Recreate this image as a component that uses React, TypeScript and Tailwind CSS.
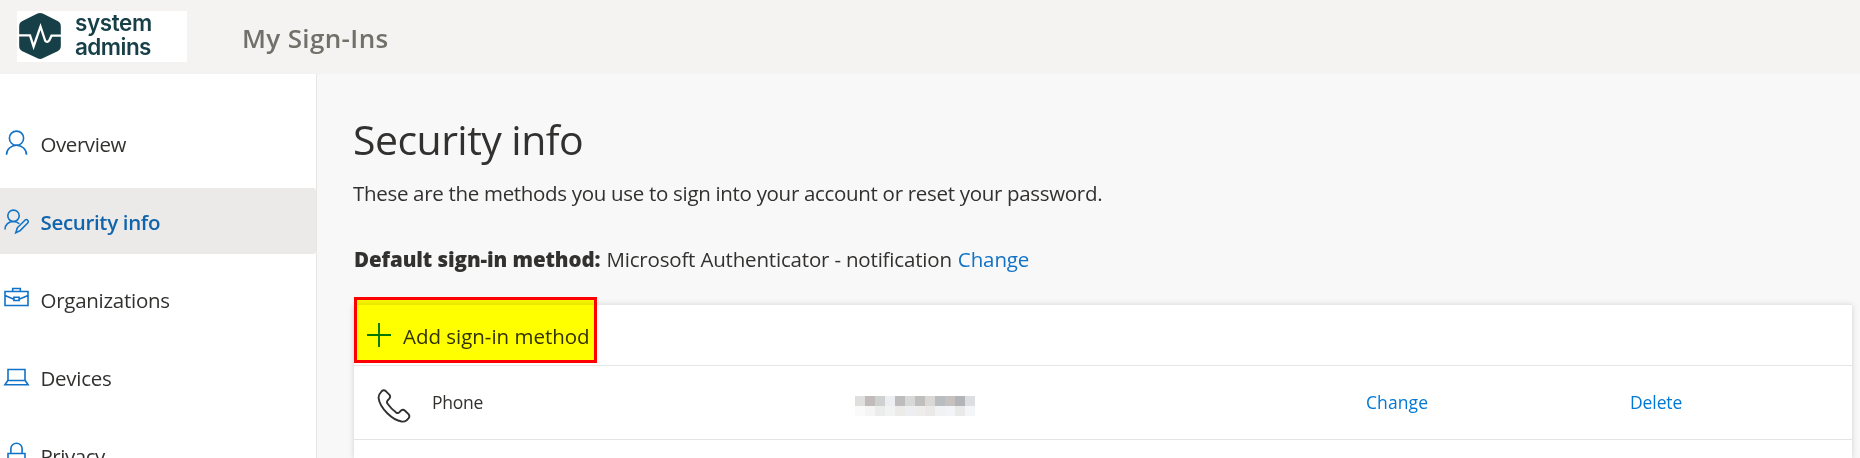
import type { ReactNode } from 'react';

function Logo() {
  return (
    <div className="flex h-[51px] w-[170px] items-start bg-white">
      <svg width="46" height="51" viewBox="0 0 46 51" className="shrink-0" fill="none">
        <path
          d="M20.500 2.600q2.600-1.300 5.200 0L40.600 10q3.200 1.700 3.200 5V35.200q0 3.300-3.200 5L25.700 47.300q-2.600 1.300-5.200 0L5.400 40.200q-3.200-1.700-3.200-5V15q0-3.300 3.200-5z"
          fill="#173f47"
        />
        <path
          d="M1.500 24.300H13L16.600 35.500 23.500 15.500 28.200 29.800Q30 32 32.200 29.500L34.500 24.700H45"
          stroke="#fff"
          strokeWidth="2.300"
        />
      </svg>
      <div className="pl-3 font-['Inter','DejaVu_Sans',sans-serif] text-[22.5px] leading-[23.500px] font-semibold text-[#173f47]">
        <div className="tracking-[-0.4px]">system</div>
        <div className="tracking-[-0.55px]">admins</div>
      </div>
    </div>
  );
}

function NavIcon({ children }: { children: ReactNode }) {
  return (
    <svg
      width="32"
      height="32"
      viewBox="0 0 32 32"
      className="shrink-0"
      fill="none"
      stroke="#1272c6"
      strokeWidth="1.600"
    >
      {children}
    </svg>
  );
}

function NavItem({
  label,
  tracking,
  active = false,
  children,
}: {
  label: string;
  tracking: string;
  active?: boolean;
  children: ReactNode;
}) {
  return (
    <a
      className={`flex h-[66px] shrink-0 items-center rounded-r-[3px] text-[20.5px] leading-7 ${
        active ? 'bg-[#ebeae9] font-semibold text-[#1064ac]' : 'text-[#323130]'
      }`}
    >
      <NavIcon>{children}</NavIcon>
      <span className={`pt-[2px] pl-[8.500px] ${tracking}`}>{label}</span>
    </a>
  );
}

const redacted = [
  ['bg-[#dfdfdd]', 'bg-[#c2bbbb]', 'bg-[#cdd2d0]', 'bg-[#eceef1]', 'bg-[#bdbdbe]', 'bg-[#d7d9d8]', 'bg-[#c0bfbe]', 'bg-[#d9d8d6]', 'bg-[#babdc0]', 'bg-[#c4c1be]', 'bg-[#b2b4b7]', 'bg-[#dddee1]'],
  ['bg-[#fafafa]', 'bg-[#f6f5f5]', 'bg-[#ebecec]', 'bg-[#f1f3f3]', 'bg-[#ecebe9]', 'bg-[#eceef1]', 'bg-[#eeedeb]', 'bg-[#ebe9e7]', 'bg-[#f0f2f4]', 'bg-[#f2f4f7]', 'bg-[#e9e9e9]', 'bg-[#f3f5f8]'],
];

export default function App() {
  return (
    <div className="flex h-[458px] w-[1860px] flex-col overflow-hidden bg-[#f8f8f8] font-['Open_Sans','Noto_Sans',sans-serif] text-[#323130]">
      <header className="flex h-[74px] shrink-0 items-start bg-[#f4f3f2] pt-[11px] pl-[17px]">
        <Logo />
        <div className="pt-[9px] pl-[55px] text-[26px] leading-9 font-semibold tracking-[0.36px] text-[#737069]">
          My Sign-Ins
        </div>
      </header>

      <div className="flex min-h-0 flex-1">
        <nav className="flex w-[317px] shrink-0 flex-col gap-3 overflow-hidden border-r border-[#e6e6e6] bg-white pt-9">
          <NavItem label="Overview" tracking="tracking-[-0.43px]">
            <circle cx="16.500" cy="11.200" r="7.100" />
            <path d="M6.500 27.800a10 9.600 0 0 1 20 0" />
          </NavItem>
          <NavItem label="Security info" tracking="tracking-[-0.33px]" active>
            <circle cx="13.500" cy="10.800" r="5.700" />
            <path d="M5 24.400c0-4.800 3.800-7.900 8.300-7.900 2.400 0 4.500.800 6 2.300M15.800 27.800l1.500-5L24.900 15.200a1.900 1.900 0 0 1 2.800 2.800L20.200 25.600z" />
          </NavItem>
          <NavItem label="Organizations" tracking="tracking-[-0.27px]">
            <path d="M5 8.500H28V22.500H5zM12.700 8.500V5.500H20.300V8.500M5 12.500l8.900 3.700M28 12.500l-8.900 3.700M13.900 14.300H19.100V17.500H13.900z" />
          </NavItem>
          <NavItem label="Devices" tracking="tracking-[-0.27px]">
            <path d="M8 19.500V8.500H25V19.500zM7.800 19.500L4.900 23.700H28.100L25.200 19.500" />
          </NavItem>
          <NavItem label="Privacy" tracking="tracking-[-0.47px]">
            <path d="M8 14.500H25V26H8zM10.900 14.500V9.500a5.600 5.300 0 0 1 11.200 0V14.500" />
          </NavItem>
        </nav>

        <main className="flex flex-1 flex-col pt-[37px] pr-2 pl-[37px]">
          <h1 className="-ml-px text-[41px] leading-[56px] tracking-[-0.54px]">Security info</h1>
          <p className="mt-3 -ml-px text-[20.5px] leading-7 tracking-[-0.31px]">
            These are the methods you use to sign into your account or reset your password.
          </p>
          <div className="mt-[38px] flex gap-[6px] text-[20.5px] leading-7">
            <span className="font-extrabold tracking-[-0.08px]">Default sign-in method:</span>
            <span className="tracking-[-0.18px]">Microsoft Authenticator - notification</span>
            <a className="tracking-[-0.12px] text-[#1272c6]">Change</a>
          </div>

          <section className="relative mt-[31px] flex flex-1 flex-col border-t border-[#e8e8e8] bg-white shadow-[0_1px_6px_rgba(0,0,0,0.16)]">
            <div className="flex h-[61px] shrink-0 items-center border-b border-[#e5e5e5] pl-[13px]">
              <svg width="24" height="24" viewBox="0 0 24 24" stroke="#0078d4" strokeWidth="1.900">
                <path d="M0 12H24M12 0V24" />
              </svg>
              <span className="pt-[2px] pl-3 text-[20.5px] leading-7 tracking-[-0.02px]">
                Add sign-in method
              </span>
            </div>
            <div className="grid h-[74px] shrink-0 grid-cols-[78px_423px_511px_264px_1fr] items-center border-b border-[#e5e5e5] text-[17.5px] leading-6">
              <svg
                width="34"
                height="34"
                viewBox="0 0 34 34"
                className="mt-[7px] ml-[23px]"
                fill="none"
                stroke="#323130"
                strokeWidth="1.900"
                strokeLinejoin="round"
              >
                <path d="M4.600 2.300Q6.800.400 9 2.300L12.300 5.700Q14 7.700 12.300 9.700L10.600 11.500Q9.300 13 10.600 14.800Q14.200 19.900 19.200 23.600Q20.900 24.700 22.300 23.300L23.900 21.700Q26 19.900 28 21.700L31.500 25.100Q33.200 27.200 31.500 29.400L29.400 31.500Q27.400 32.900 24.600 32.500Q17.500 31.300 10.300 24.200Q2.600 16.600 1.600 9.100Q1.300 5.600 4.600 2.300z" />
              </svg>
              <span className="mb-[2px] tracking-[-0.25px]">Phone</span>
              <div className="mt-[6px] grid w-[120px] grid-cols-12">
                {redacted.flat().map((tone, i) => (
                  <span key={i} className={`h-[10px] ${tone}`} />
                ))}
              </div>
              <a className="mb-[2px] tracking-[0.1px] text-[#0078d4]">Change</a>
              <a className="mb-[2px] tracking-[-0.1px] text-[#0078d4]">Delete</a>
            </div>
            <div className="pointer-events-none absolute top-[-8px] left-0 h-[66px] w-[243px] bg-[#ffff00] mix-blend-multiply" />
            <div className="pointer-events-none absolute top-[-8px] left-0 h-[66px] w-[243px] border-[3px] border-[#ff0000]" />
          </section>
        </main>
      </div>
    </div>
  );
}
